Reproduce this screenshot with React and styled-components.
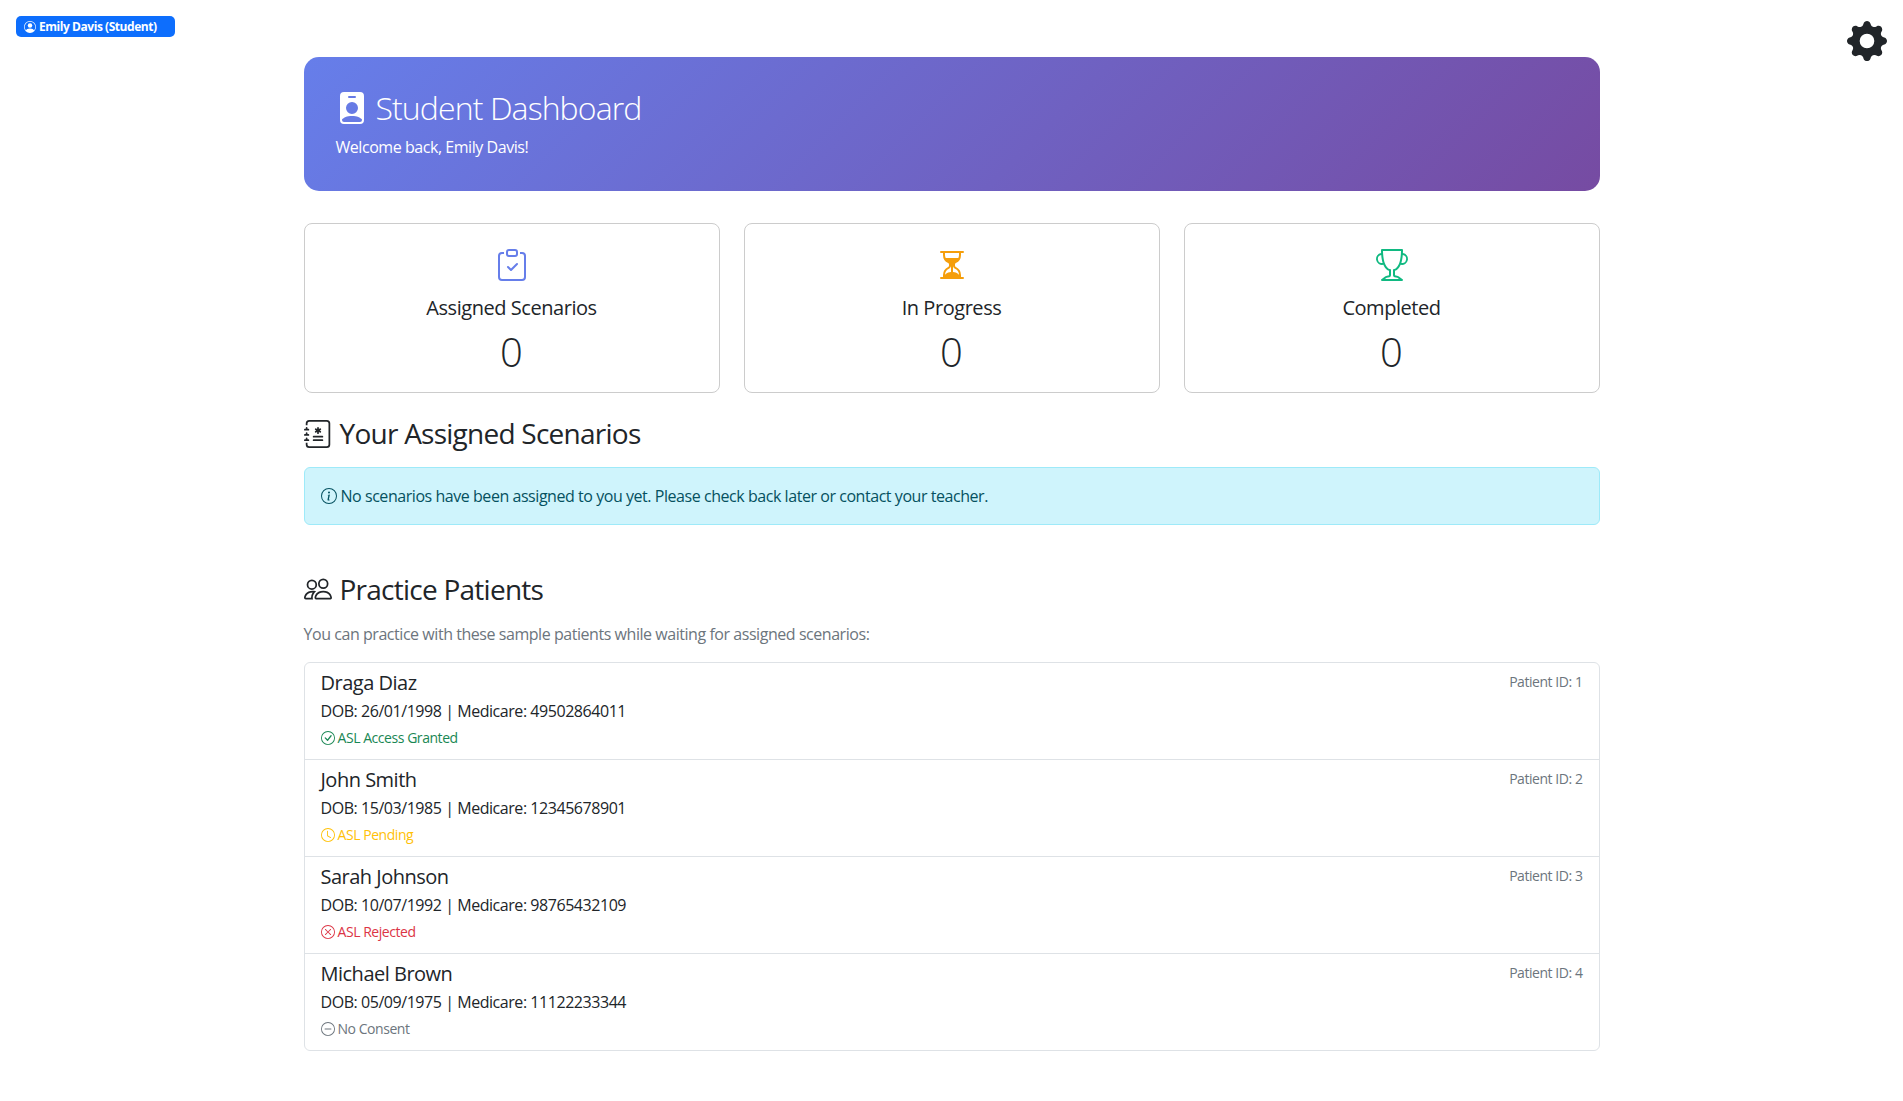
import React from "react";
import styled, { createGlobalStyle } from "styled-components";
import {
  BsPersonCircle, BsGearFill, BsPersonBadgeFill, BsClipboardCheck, BsHourglassSplit, BsTrophy,
  BsJournalMedical, BsInfoCircle, BsPeople, BsCheckCircle, BsClock, BsXCircle, BsDashCircle,
} from "react-icons/bs";

const Global = createGlobalStyle`
  * { box-sizing: border-box; }
  body { margin: 0; background: #fff; color: #212529; font-family: "Open Sans", "Noto Sans", sans-serif; font-size: 16px; line-height: 1.5; letter-spacing: -0.45px; }
`;

const UserBadge = styled.div`
  position: absolute; top: 16px; left: 16px; height: 21px; width: 159px; padding: 0 8px;
  display: flex; align-items: center; gap: 3px;
  background: #0d6efd; color: #fff; border-radius: 5px;
  font-size: 12px; font-weight: 700; line-height: 1; white-space: nowrap;
`;
const Gear = styled.div`
  position: absolute; top: 21px; right: 16px; font-size: 40px; line-height: 0; color: #212529;
`;
const Container = styled.main`
  width: 1296px; margin: 0 auto; padding-top: 57px; position: relative; left: 0;
`;
const Hero = styled.header`
  height: 134px; padding: 32px; border-radius: 15px; color: #fff;
  background: linear-gradient(135deg, #667eea 0%, #764ba2 100%);
`;
const HeroTitle = styled.h1`
  margin: 0 0 8px; font-size: 32px; font-weight: 300; line-height: 1.2; display: flex; align-items: center; gap: 8px; letter-spacing: -0.9px;
  svg { font-size: 32px; }
`;
const HeroText = styled.p`margin: 0; font-size: 16px;`;
const Stats = styled.section`
  display: grid; grid-template-columns: repeat(3, 1fr); gap: 24px; margin-top: 32px;
`;
const StatCard = styled.article`
  height: 170px; border: 1px solid #ccc; border-radius: 8px; padding-top: 25px; text-align: center;
  display: flex; flex-direction: column; align-items: center;
`;
const StatIcon = styled.div`font-size: 32px; line-height: 0; color: ${p => p.$color}; margin-bottom: 15px;`;
const StatLabel = styled.div`font-size: 20px; line-height: 24px;`;
const StatValue = styled.div`font-size: 40px; font-weight: 300; line-height: 48px; margin-top: 8px; letter-spacing: 0;`;
const SectionTitle = styled.h3`
  margin: 0; font-size: 28px; font-weight: 400; line-height: 1.2; display: flex; align-items: center; gap: 8px; letter-spacing: -0.75px;
`;
const AssignedTitle = styled(SectionTitle)`margin-top: 24px;`;
const PracticeTitle = styled(SectionTitle)`margin-top: 48px;`;
const Alert = styled.div`
  margin-top: 16px; height: 58px; padding: 0 16px; display: flex; align-items: center; gap: 4px;
  background: #cff4fc; border: 1px solid #9eeaf9; border-radius: 6px; color: #055160;
`;
const Intro = styled.p`margin: 16px 0 16px; color: #6c757d; font-size: 16px;`;
const List = styled.ul`
  list-style: none; margin: 0; padding: 0; border: 1px solid #dee2e6; border-radius: 6px;
`;
const Row = styled.li`
  height: 97px; padding: 8px 16px; display: flex; justify-content: space-between; border-top: 1px solid #dee2e6;
  &:first-child { border-top: 0; height: 96px; }
`;
const Name = styled.h5`margin: 0 0 4px; font-size: 20px; font-weight: 400; line-height: 1.2; letter-spacing: -0.5px;`;
const Meta = styled.p`margin: 0 0 4px; font-size: 16px; line-height: 24px;`;
const Status = styled.small`
  display: flex; align-items: center; gap: 3px; font-size: 14px; line-height: 21px; color: ${p => p.$color};
`;
const PatientId = styled.small`font-size: 14px; color: #6c757d; line-height: 21px;`;

const patients = [
  { id: 1, name: "Draga Diaz", dob: "26/01/1998", med: "49502864011", status: "ASL Access Granted", color: "#198754", Icon: BsCheckCircle },
  { id: 2, name: "John Smith", dob: "15/03/1985", med: "12345678901", status: "ASL Pending", color: "#ffc107", Icon: BsClock },
  { id: 3, name: "Sarah Johnson", dob: "10/07/1992", med: "98765432109", status: "ASL Rejected", color: "#dc3545", Icon: BsXCircle },
  { id: 4, name: "Michael Brown", dob: "05/09/1975", med: "11122233344", status: "No Consent", color: "#6c757d", Icon: BsDashCircle },
];

export default function App() {
  return (
    <>
      <Global />
      <UserBadge><BsPersonCircle size={12} /> Emily Davis (Student)</UserBadge>
      <Gear><BsGearFill /></Gear>
      <Container>
        <Hero>
          <HeroTitle><BsPersonBadgeFill /> Student Dashboard</HeroTitle>
          <HeroText>Welcome back, Emily Davis!</HeroText>
        </Hero>
        <Stats>
          <StatCard><StatIcon $color="#667eea"><BsClipboardCheck /></StatIcon><StatLabel>Assigned Scenarios</StatLabel><StatValue>0</StatValue></StatCard>
          <StatCard><StatIcon $color="#f59e0b"><BsHourglassSplit /></StatIcon><StatLabel>In Progress</StatLabel><StatValue>0</StatValue></StatCard>
          <StatCard><StatIcon $color="#10b981"><BsTrophy /></StatIcon><StatLabel>Completed</StatLabel><StatValue>0</StatValue></StatCard>
        </Stats>
        <AssignedTitle><BsJournalMedical /> Your Assigned Scenarios</AssignedTitle>
        <Alert><BsInfoCircle /> No scenarios have been assigned to you yet. Please check back later or contact your teacher.</Alert>
        <PracticeTitle><BsPeople /> Practice Patients</PracticeTitle>
        <Intro>You can practice with these sample patients while waiting for assigned scenarios:</Intro>
        <List>
          {patients.map(({ id, name, dob, med, status, color, Icon }) => (
            <Row key={id}>
              <div>
                <Name>{name}</Name>
                <Meta>DOB: {dob} | Medicare: {med}</Meta>
                <Status $color={color}><Icon /> {status}</Status>
              </div>
              <PatientId>Patient ID: {id}</PatientId>
            </Row>
          ))}
        </List>
      </Container>
    </>
  );
}
